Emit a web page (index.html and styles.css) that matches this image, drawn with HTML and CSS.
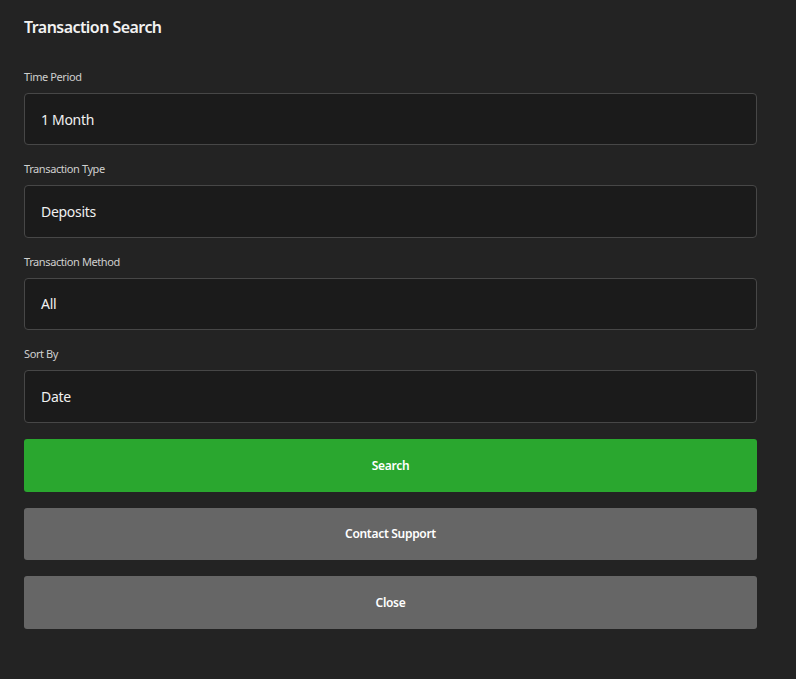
FILE: index.html
```html
<!DOCTYPE html>
<html>
<head>
<meta charset="utf-8">
<link rel="stylesheet" href="styles.css">
</head>
<body>
<div class="panel">
  <h1 class="title">Transaction Search</h1>
  <div class="field">
    <label class="label">Time Period</label>
    <div class="input">1 Month</div>
  </div>
  <div class="field">
    <label class="label">Transaction Type</label>
    <div class="input">Deposits</div>
  </div>
  <div class="field">
    <label class="label">Transaction Method</label>
    <div class="input">All</div>
  </div>
  <div class="field">
    <label class="label">Sort By</label>
    <div class="input">Date</div>
  </div>
  <div class="buttons">
    <button class="btn btn-green">Search</button>
    <button class="btn btn-grey">Contact Support</button>
    <button class="btn btn-grey">Close</button>
  </div>
</div>
</body>
</html>
```
FILE: styles.css
```css
html, body {
  margin: 0;
  padding: 0;
  background: #232323;
  height: 100%;
}
body {
  font-family: "Noto Sans", "Open Sans", sans-serif;
  color: #eee;
}
.panel {
  width: 733px;
  padding: 16px 39px 0 24px;
  display: flex;
  flex-direction: column;
}
.title {
  margin: 0 0 30px 0;
  font-size: 16px;
  line-height: 23px;
  font-weight: 600;
  letter-spacing: -0.55px;
  color: #f2f2f2;
}
.field {
  display: flex;
  flex-direction: column;
  margin-bottom: 16px;
}
.label {
  font-size: 11px;
  line-height: 16px;
  letter-spacing: -0.4px;
  color: #cfcfcf;
  margin-bottom: 8px;
}
.input {
  box-sizing: border-box;
  height: 52.4px;
  border: 1px solid #474747;
  border-radius: 4px;
  background: #1b1b1b;
  padding: 0 16px;
  display: flex;
  align-items: center;
  font-size: 14px;
  letter-spacing: -0.3px;
  color: #f0f0f0;
}
.buttons {
  display: flex;
  flex-direction: column;
  gap: 16px;
  margin-top: 0.5px;
}
.btn {
  height: 52.5px;
  border: none;
  border-radius: 3px;
  font-family: "Noto Sans", "Open Sans", sans-serif;
  font-size: 12px;
  font-weight: 600;
  letter-spacing: -0.3px;
  color: #fff;
  cursor: pointer;
}
.btn-green { background: #2aa72f; }
.btn-grey { background: #666666; }
```
